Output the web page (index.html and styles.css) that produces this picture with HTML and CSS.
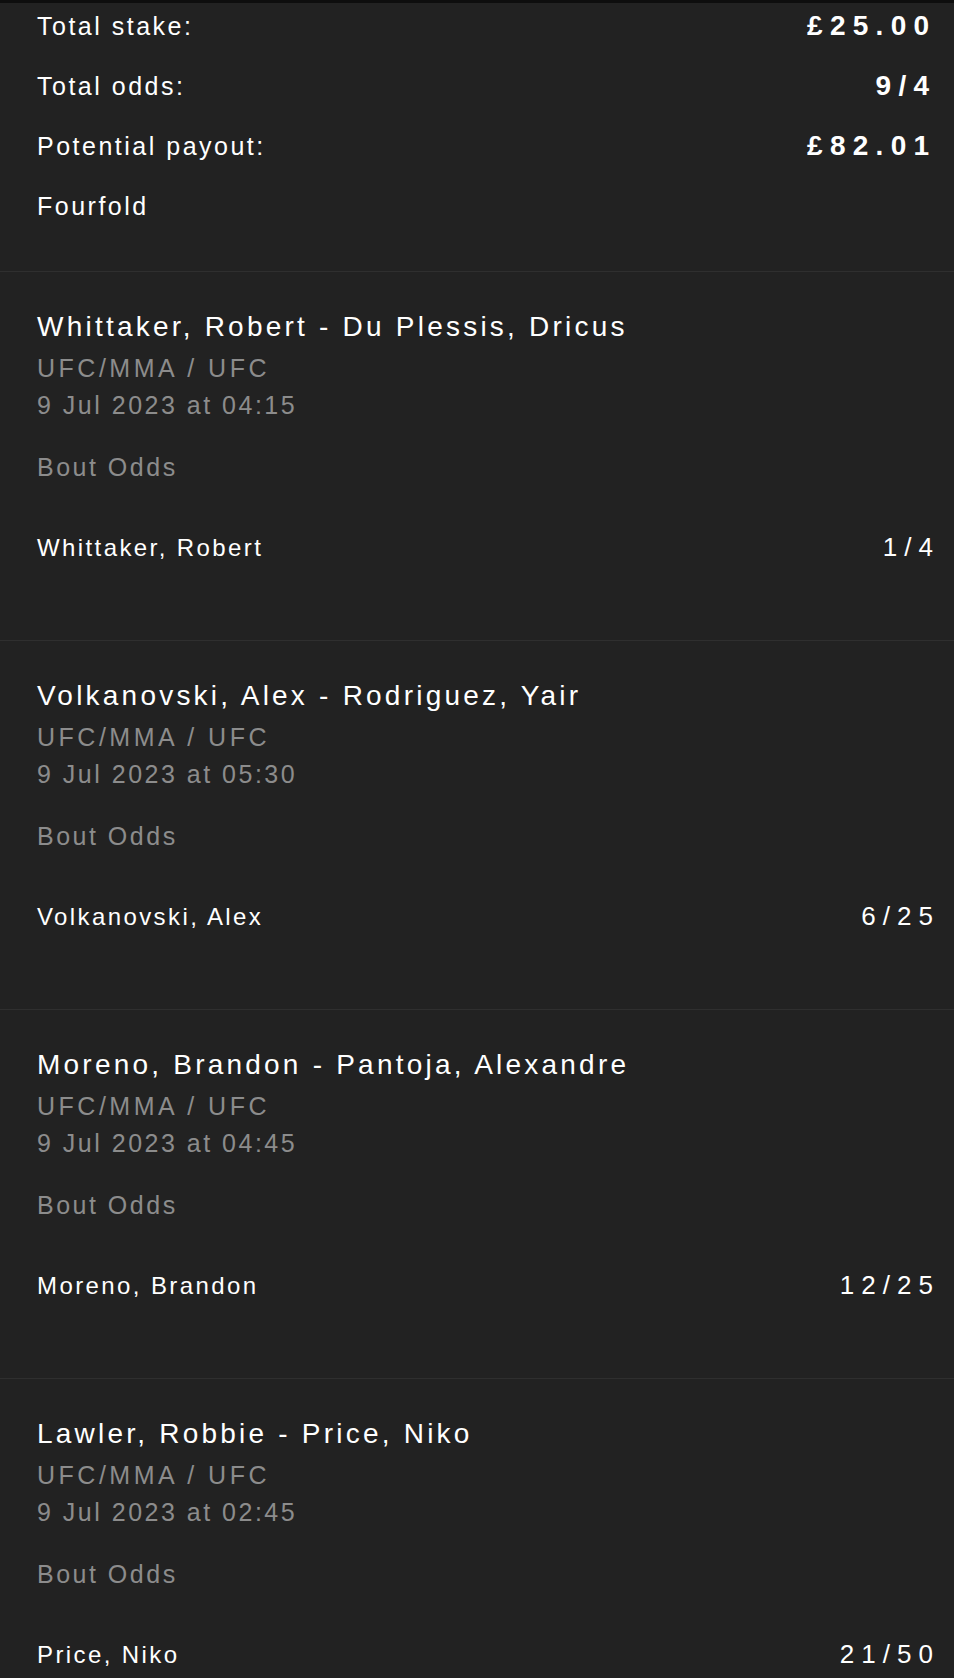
FILE: index.html
```html
<!DOCTYPE html>
<html lang="en">
<head>
<meta charset="utf-8">
<title>Bet slip</title>
<link rel="stylesheet" href="styles.css">
</head>
<body>
<div class="sheet">
  <section class="summary">
    <div class="row"><span class="label">Total stake:</span><span class="value">£25.00</span></div>
    <div class="row"><span class="label">Total odds:</span><span class="value">9/4</span></div>
    <div class="row"><span class="label">Potential payout:</span><span class="value">£82.01</span></div>
    <div class="row"><span class="label">Fourfold</span></div>
  </section>

  <section class="leg">
    <div class="title">Whittaker, Robert - Du Plessis, Dricus</div>
    <div class="meta first">UFC/MMA / UFC</div>
    <div class="meta">9 Jul 2023 at 04:15</div>
    <div class="market">Bout Odds</div>
    <div class="pick"><span class="name">Whittaker, Robert</span><span class="price">1/4</span></div>
  </section>

  <section class="leg">
    <div class="title">Volkanovski, Alex - Rodriguez, Yair</div>
    <div class="meta first">UFC/MMA / UFC</div>
    <div class="meta">9 Jul 2023 at 05:30</div>
    <div class="market">Bout Odds</div>
    <div class="pick"><span class="name">Volkanovski, Alex</span><span class="price">6/25</span></div>
  </section>

  <section class="leg">
    <div class="title">Moreno, Brandon - Pantoja, Alexandre</div>
    <div class="meta first">UFC/MMA / UFC</div>
    <div class="meta">9 Jul 2023 at 04:45</div>
    <div class="market">Bout Odds</div>
    <div class="pick"><span class="name">Moreno, Brandon</span><span class="price">12/25</span></div>
  </section>

  <section class="leg">
    <div class="title">Lawler, Robbie - Price, Niko</div>
    <div class="meta first">UFC/MMA / UFC</div>
    <div class="meta">9 Jul 2023 at 02:45</div>
    <div class="market">Bout Odds</div>
    <div class="pick"><span class="name">Price, Niko</span><span class="price">21/50</span></div>
  </section>
</div>
</body>
</html>
```

FILE: styles.css
```css
html, body {
  margin: 0;
  padding: 0;
  background: #222222;
}

body {
  font-family: "Liberation Sans", Arial, sans-serif;
  color: #ffffff;
  height: 1678px;
  overflow: hidden;
}

.sheet {
  border-top: 3px solid #0e0e0e;
  background: #222222;
}

.summary {
  display: grid;
  grid-auto-rows: 30px;
  row-gap: 30px;
  padding: 8px 21px 50px 37px;
}

.row {
  display: flex;
  justify-content: space-between;
  align-items: center;
  line-height: 30px;
}

.label {
  font-size: 25px;
  letter-spacing: 0.1em;
}

.value {
  font-size: 28px;
  font-weight: 700;
  letter-spacing: 0.26em;
  margin-right: -0.12em;
}

.leg {
  border-top: 1px solid #2f2f2f;
  padding: 38px 21px 74px 37px;
}

.title {
  font-size: 28px;
  line-height: 34px;
  letter-spacing: 0.115em;
  white-space: nowrap;
}

.meta {
  font-size: 25px;
  line-height: 37px;
  letter-spacing: 0.1em;
  color: #8c8c8c;
}

.meta.first {
  margin-top: 6px;
  letter-spacing: 0.14em;
}

.market {
  margin-top: 25px;
  font-size: 25px;
  line-height: 37px;
  letter-spacing: 0.1em;
  color: #8c8c8c;
}

.pick {
  margin-top: 43px;
  display: flex;
  justify-content: space-between;
  align-items: center;
  line-height: 37px;
}

.name {
  font-size: 24px;
  letter-spacing: 0.1em;
}

.price {
  font-size: 26px;
  letter-spacing: 0.27em;
  margin-right: -0.27em;
}
```
